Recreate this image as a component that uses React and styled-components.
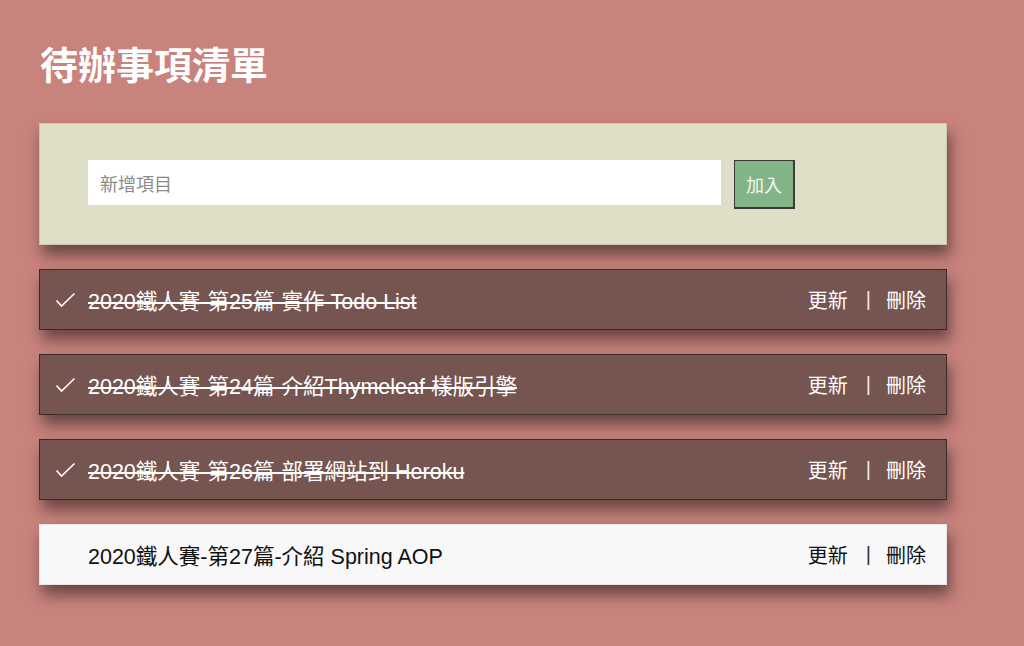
import styled, { createGlobalStyle } from 'styled-components';

const GlobalStyle = createGlobalStyle`
  html, body {
    margin: 0;
    padding: 0;
    background: #c9837d;
    font-family: "Liberation Sans", "Noto Sans CJK TC", sans-serif;
  }
`

const Page = styled.div`
  width: 908px;
  padding: 38px 0 80px 39px;
`

const Title = styled.h1`
  margin: 0 0 35px 1px;
  font-size: 38px;
  line-height: 50px;
  font-weight: 700;
  color: #ffffff;
  font-family: "Noto Sans CJK TC", sans-serif;
`

const Panel = styled.form`
  display: flex;
  align-items: flex-start;
  gap: 13px;
  padding: 36px 48px 35px;
  background: #dfdfc8;
  border: 1px solid #c9c9b0;
  box-shadow: 3px 10px 14px rgba(30, 20, 20, 0.55);
`

const Input = styled.input`
  width: 633px;
  height: 45px;
  box-sizing: border-box;
  border: none;
  outline: none;
  padding: 0 12px;
  font-size: 18px;
  font-family: "Noto Sans CJK TC", sans-serif;
  background: #ffffff;

  &::placeholder {
    color: #8a8a8a;
  }
`

const AddButton = styled.button`
  width: 61px;
  height: 49px;
  box-sizing: border-box;
  background: #83b487;
  color: #f4f4f4;
  font-size: 18px;
  font-family: "Noto Sans CJK TC", sans-serif;
  border: 1px solid #3a3a3a;
  border-right-width: 2px;
  border-bottom-width: 2px;
  padding: 0;
`

const List = styled.ul`
  list-style: none;
  margin: 24px 0 0;
  padding: 0;
  display: flex;
  flex-direction: column;
  gap: 24px;
`

const Item = styled.li`
  display: flex;
  align-items: center;
  height: 61px;
  box-sizing: border-box;
  padding: 0 20px 0 15px;
  background: ${p => (p.$done ? '#76544f' : '#f8f8f8')};
  border: 1px solid ${p => (p.$done ? '#3a2a28' : '#e6e6e6')};
  color: ${p => (p.$done ? '#ffffff' : '#111111')};
  box-shadow: 3px 10px 14px rgba(30, 20, 20, 0.55);
`

const Check = styled.span`
  width: 21px;
  height: 18px;
  margin-right: 12px;
  display: flex;
  align-items: center;
`

const Text = styled.span`
  flex: 1;
  font-size: 21.5px;
  text-decoration: ${p => (p.$done ? 'line-through' : 'none')};
  text-decoration-thickness: 1.5px;
`

const Actions = styled.div`
  display: flex;
  align-items: center;
  font-size: 20px;
  font-family: "Noto Sans CJK TC", sans-serif;
`

const Action = styled.a`
  cursor: pointer;
`

const Divider = styled.span`
  margin: 0 15px 0 18px;
  font-family: "Liberation Sans", sans-serif;
  opacity: 0.85;
`

const todos = [
  { text: '2020鐵人賽-第25篇-實作 Todo List', done: true },
  { text: '2020鐵人賽-第24篇-介紹Thymeleaf 樣版引擎', done: true },
  { text: '2020鐵人賽-第26篇-部署網站到 Heroku', done: true },
  { text: '2020鐵人賽-第27篇-介紹 Spring AOP', done: false },
]

const App = () => {
  return (
    <Page>
      <GlobalStyle />
      <Title>待辦事項清單</Title>
      <Panel onSubmit={e => e.preventDefault()}>
        <Input placeholder="新增項目" />
        <AddButton type="submit">加入</AddButton>
      </Panel>
      <List>
        {todos.map(todo => (
          <Item key={todo.text} $done={todo.done}>
            <Check>
              {todo.done && (
                <svg width="21" height="16" viewBox="0 0 21 16">
                  <polyline points="1.5,8.5 6.5,14 19.5,1.5" fill="none" stroke="#ffffff" strokeWidth="1.6" />
                </svg>
              )}
            </Check>
            <Text $done={todo.done}>{todo.text}</Text>
            <Actions>
              <Action>更新</Action>
              <Divider>|</Divider>
              <Action>刪除</Action>
            </Actions>
          </Item>
        ))}
      </List>
    </Page>
  )
};

export default App;
